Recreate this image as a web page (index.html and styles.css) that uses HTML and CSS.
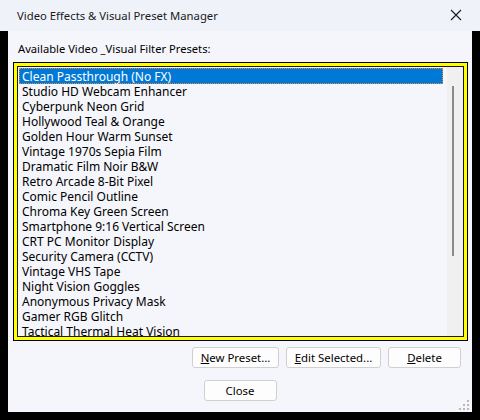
FILE: index.html
```html
<!DOCTYPE html>
<html>
<head>
<meta charset="utf-8">
<link rel="stylesheet" href="styles.css">
</head>
<body>
<div class="window">
  <div class="titlebar">
    <span class="title">Video Effects &amp; Visual Preset Manager</span>
    <svg class="xbtn" width="12" height="12" viewBox="0 0 12 12"><path d="M1 1 L11 11 M11 1 L1 11" stroke="#1a1a1a" stroke-width="1.1" fill="none"/></svg>
  </div>
  <div class="frame">
    <div class="client">
      <div class="label">Available Video _Visual Filter Presets:</div>
      <div class="lb-outer">
        <div class="lb">
          <div class="items">
            <div class="item sel">Clean Passthrough (No FX)</div>
            <div class="item">Studio HD Webcam Enhancer</div>
            <div class="item">Cyberpunk Neon Grid</div>
            <div class="item">Hollywood Teal &amp; Orange</div>
            <div class="item">Golden Hour Warm Sunset</div>
            <div class="item">Vintage 1970s Sepia Film</div>
            <div class="item">Dramatic Film Noir B&amp;W</div>
            <div class="item">Retro Arcade 8-Bit Pixel</div>
            <div class="item">Comic Pencil Outline</div>
            <div class="item">Chroma Key Green Screen</div>
            <div class="item">Smartphone 9:16 Vertical Screen</div>
            <div class="item">CRT PC Monitor Display</div>
            <div class="item">Security Camera (CCTV)</div>
            <div class="item">Vintage VHS Tape</div>
            <div class="item">Night Vision Goggles</div>
            <div class="item">Anonymous Privacy Mask</div>
            <div class="item">Gamer RGB Glitch</div>
            <div class="item">Tactical Thermal Heat Vision</div>
          </div>
          <div class="scrollbar"><div class="thumb"></div></div>
        </div>
      </div>
      <div class="buttons">
        <button class="btn w87"><u>N</u>ew Preset...</button>
        <button class="btn w95"><u>E</u>dit Selected...</button>
        <button class="btn w73"><u>D</u>elete</button>
      </div>
      <div class="closerow">
        <button class="btn w73">Close</button>
      </div>
      <svg class="grip" width="10" height="10" viewBox="0 0 10 10">
        <rect x="8" y="0" width="2" height="2" fill="#b8b8b8"/>
        <rect x="4" y="4" width="2" height="2" fill="#b8b8b8"/>
        <rect x="8" y="4" width="2" height="2" fill="#b8b8b8"/>
        <rect x="0" y="8" width="2" height="2" fill="#b8b8b8"/>
        <rect x="4" y="8" width="2" height="2" fill="#b8b8b8"/>
        <rect x="8" y="8" width="2" height="2" fill="#b8b8b8"/>
      </svg>
    </div>
  </div>
</div>
</body>
</html>
```
FILE: styles.css
```css
* { box-sizing: border-box; }
html, body { margin: 0; padding: 0; }
body {
  width: 480px;
  height: 420px;
  overflow: hidden;
  font-family: "Noto Sans", "Liberation Sans", sans-serif;
  font-size: 12px;
  color: #000;
  background: #000;
}
.window { width: 480px; height: 420px; display: flex; flex-direction: column; }
.titlebar {
  height: 31px;
  flex: none;
  background: #eff2f9;
  display: flex;
  align-items: center;
  justify-content: space-between;
  padding: 0 18px 1px 17px;
}
.title { font-size: 11.3px; color: #1a1a1a; }
.xbtn { display: block; }
.frame { flex: 1; background: #000; padding: 0 8px 8px 8px; display: flex; }
.client {
  flex: 1;
  background: #f5f6fb;
  position: relative;
  display: flex;
  flex-direction: column;
}
.label { margin: 10px 0 0 10px; height: 16px; line-height: 16px; font-size: 11.2px; }
.lb-outer {
  margin: 5px 0 0 5px;
  width: 455px;
  height: 279px;
  border: 1px solid #000;
  background: #ffff00;
  padding: 3px;
  flex: none;
}
.lb {
  height: 100%;
  border: 1px solid #1a1a1a;
  background: #f5f6fb;
  display: flex;
  overflow: hidden;
  padding: 1px 0 0 1px;
}
.items { width: 424px; flex: none; padding-top: 1px; }
.item { height: 15px; line-height: 15px; padding-left: 3px; white-space: nowrap; }
.item.sel {
  margin-top: -1px;
  height: 16px;
  padding-top: 1px;
  background: #0078d7;
  color: #fff;
  outline: 1px dotted #f08a24;
  outline-offset: -1px;
}
.scrollbar {
  margin-left: auto;
  width: 16px;
  background: #f0f0f0;
  margin-top: -1px;
  position: relative;
}
.thumb {
  position: absolute;
  left: 5px;
  top: 19px;
  width: 2px;
  height: 170px;
  background: #8a8a8a;
}
.buttons {
  display: flex;
  justify-content: flex-end;
  gap: 7px;
  margin-top: 6px;
  padding-right: 11px;
}
.btn {
  height: 21px;
  font-family: inherit;
  font-size: 11.4px;
  color: #000;
  background: #fdfdfd;
  border: 1px solid #d0d0d0;
  border-radius: 3px;
  padding: 0;
  line-height: 18px;
}
.w87 { width: 87px; }
.w95 { width: 95px; }
.w73 { width: 73px; }
.closerow { display: flex; justify-content: center; margin-top: 12px; }
.grip { position: absolute; right: 3px; bottom: 2px; }
```
